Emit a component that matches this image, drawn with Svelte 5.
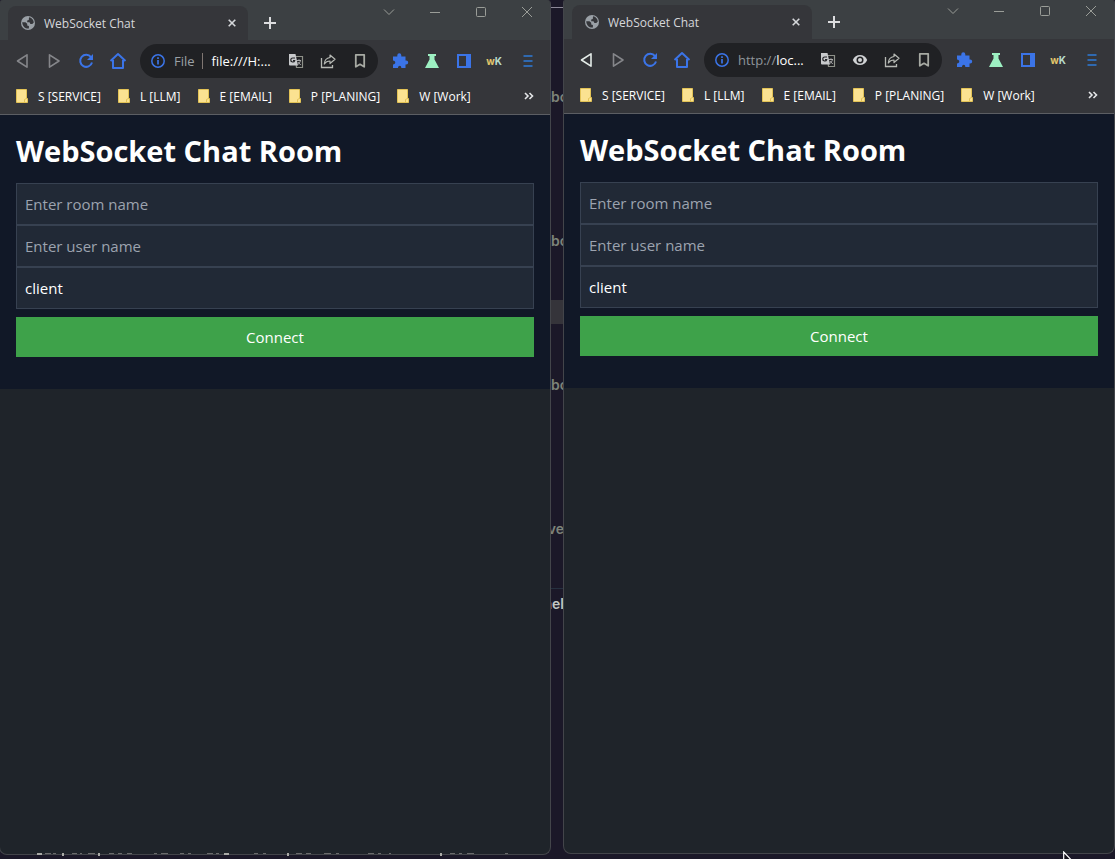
<script>
  const windows = [
    { id: 'left', back: false, eye: false },
    { id: 'right', back: true, eye: true }
  ];
  const bookmarks = ['S [SERVICE]', 'L [LLM]', 'E [EMAIL]', 'P [PLANING]', 'W [Work]'];
  const fragments = [
    { text: 'bo', top: 86 },
    { text: 'bo', top: 230 },
    { text: 'bo', top: 374 },
    { text: 'ove', top: 518, end: true },
    { text: 'hel', top: 593, end: true, bright: true }
  ];
  const slivers = [
    [37, 5, 2], [45, 6, 1], [53, 3, 1], [62, 2, 3], [72, 5, 1], [80, 2, 1], [88, 7, 1], [98, 2, 3],
    [109, 5, 1], [118, 4, 1], [127, 5, 1], [154, 3, 1], [161, 7, 1], [180, 4, 1], [188, 3, 1],
    [207, 6, 1], [216, 3, 1], [224, 5, 2], [254, 4, 1], [263, 3, 1], [287, 2, 3], [296, 6, 1],
    [306, 5, 1], [324, 7, 1], [336, 3, 1], [368, 6, 1], [378, 3, 1], [389, 2, 1], [440, 2, 3],
    [450, 5, 1], [459, 3, 1], [467, 7, 1], [505, 3, 1]
  ];
</script>

<main class="desktop">
  <div class="backdrop" aria-hidden="true">
    <div class="rule"></div>
    <div class="band"></div>
    <div class="rule low"></div>
    {#each fragments as f}
      <span class="fragment" class:end={f.end} class:bright={f.bright} style="top: {f.top}px">{f.text}</span>
    {/each}
  </div>

  {#each windows as w}
    <section class="window {w.id}">
      <header>
        <div class="tabstrip">
          <div class="tab">
            <svg class="globe" width="16" height="16" viewBox="0 0 16 16">
              <circle cx="8" cy="8" r="7" fill="#9aa0a6" />
              <path d="M2.2 7.2h3.3l1.7 1.6v1.7l1.7.4v2.6c-3.4.4-6.4-2-6.7-6.3zM9 2.3c2.6.4 4.6 2.6 4.8 5.1l-1.5 1.7-1.9-.2-.9-1.7H7.200V5.600l1.600-.5z" fill="#35363a" />
            </svg>
            <span class="title">WebSocket Chat</span>
            <button class="close" aria-label="Close tab">
              <svg width="8" height="8" viewBox="0 0 8 8"><path d="M.7.7l6.6 6.6M7.300.7L.7 7.300" stroke="#d5d7da" stroke-width="1.600" /></svg>
            </button>
          </div>
          <button class="plus" aria-label="New tab">
            <svg width="12" height="12" viewBox="0 0 12 12"><path d="M6 0v12M0 6h12" stroke="#dcdddf" stroke-width="2" /></svg>
          </button>
          <div class="controls">
            <button aria-label="Search tabs"><svg width="12" height="12" viewBox="0 0 12 12"><path d="M1 3.500l5 5 5-5" /></svg></button>
            <button aria-label="Minimize"><svg width="12" height="12" viewBox="0 0 12 12"><path d="M1 6.500h10" /></svg></button>
            <button aria-label="Maximize"><svg width="12" height="12" viewBox="0 0 12 12"><rect x="1.500" y="1.500" width="9" height="9" rx="1" /></svg></button>
            <button aria-label="Close"><svg width="12" height="12" viewBox="0 0 12 12"><path d="M1 1l10 10M11 1L1 11" /></svg></button>
          </div>
        </div>

        <div class="toolbar">
          <button aria-label="Back" class:active={w.back}>
            <svg width="18" height="18" viewBox="0 0 18 18"><path d="M14 2.800v12.400L4.500 9z" fill="none" stroke="currentColor" stroke-width="1.600" stroke-linejoin="round" /></svg>
          </button>
          <button aria-label="Forward">
            <svg width="18" height="18" viewBox="0 0 18 18"><path d="M4.500 2.800v12.400L14 9z" fill="none" stroke="currentColor" stroke-width="1.600" stroke-linejoin="round" /></svg>
          </button>
          <button aria-label="Reload">
            <svg width="18" height="18" viewBox="0 0 18 18"><path d="M14 5.200A6 6 0 1 0 15 10.500" fill="none" stroke="#3b74e7" stroke-width="2" /><path d="M16 2v6h-6z" fill="#3b74e7" /></svg>
          </button>
          <button aria-label="Home">
            <svg width="18" height="18" viewBox="0 0 18 18"><path d="M1.500 9L9 2l7.500 7M4 8v8h10V8" fill="none" stroke="#3b74e7" stroke-width="2" stroke-linejoin="round" /></svg>
          </button>
          <div class="omnibox">
            <svg class="info" width="16" height="16" viewBox="0 0 16 16"><circle cx="8" cy="8" r="6.200" fill="none" stroke="#3b74e7" stroke-width="1.500" /><path d="M8 7v4.500M8 4.300v1.700" stroke="#3b74e7" stroke-width="1.700" /></svg>
            {#if w.eye}
              <span class="url"><i>http://</i>loc...</span>
            {:else}
              <span class="scheme">File</span>
              <span class="divider"></span>
              <span class="url">file:///H:...</span>
            {/if}
            <div class="actions">
              <button aria-label="Translate">
                <svg width="16" height="16" viewBox="0 0 16 16"><path d="M7 3.500h7.500v11H8.500z" fill="none" stroke="#8e9189" stroke-width="1.200" /><path d="M1 1h6.500l2.500 11.500H2a1 1 0 0 1-1-1z" fill="#c8cacc" /><path d="M7 5H4.800a2 2 0 1 0 1.900 2.500H5" fill="none" stroke="#202124" stroke-width="1.200" /><path d="M9 7.500h4M11 6.300v1.200M12.500 7.500c-.5 2-1.500 3.200-2.500 4M9.800 9l3 3" fill="none" stroke="#aaa" stroke-width="1" /></svg>
              </button>
              {#if w.eye}
                <button aria-label="Blocked cookies">
                  <svg width="16" height="16" viewBox="0 0 16 16"><path d="M.8 8C2.200 4.700 4.900 3 8 3s5.800 1.700 7.200 5c-1.400 3.300-4.100 5-7.200 5S2.200 11.300.8 8z" fill="#d0d2d4" /><circle cx="8" cy="8" r="3.500" fill="#202124" /><circle cx="8" cy="8" r="2" fill="#d0d2d4" /></svg>
                </button>
              {/if}
              <button aria-label="Share">
                <svg width="16" height="16" viewBox="0 0 16 16"><path d="M1.500 5v9.500h11V12" fill="none" stroke="#b6b9b4" stroke-width="1.300" /><path d="M10 2l5 4.300-5 4.200V8C7.500 8 5.600 9 4.300 11 4.500 7.300 6.500 5 10 4.500z" fill="none" stroke="#b6b9b4" stroke-width="1.200" stroke-linejoin="round" /></svg>
              </button>
              <button aria-label="Bookmark this page">
                <svg width="16" height="16" viewBox="0 0 16 16"><path d="M3.800 1.800h8.400v12L8 11.300l-4.200 2.500z" fill="none" stroke="#a7aaa3" stroke-width="1.800" stroke-linejoin="round" /></svg>
              </button>
            </div>
          </div>
          <button aria-label="Extensions">
            <svg width="18" height="18" viewBox="0 0 18 18"><path d="M2 4.500h4.300V3.300a2 2 0 0 1 4 0v1.200h4.200v4h.7a2 2 0 0 1 0 4h-.7V16h-4.200c.2-3-3.200-3-3.300 0H2v-3.500c3-.2 3-3.700 0-4z" fill="#3b74e7" /></svg>
          </button>
          <button aria-label="Labs">
            <svg width="18" height="18" viewBox="0 0 18 18"><path d="M5 2h8v2h-1.500v3.500L16 16H2l4.500-8.500V4H5z" fill="#9df0c2" /></svg>
          </button>
          <button aria-label="Side panel">
            <svg width="18" height="18" viewBox="0 0 18 18"><path d="M2 2h14v14H2zM4 4v10h7V4z" fill="#3b74e7" fill-rule="evenodd" /></svg>
          </button>
          <button class="profile" aria-label="Profile"><b>w</b><b class="k">K</b></button>
          <button aria-label="Menu">
            <svg width="18" height="18" viewBox="0 0 18 18"><path d="M4.500 4h9M4.500 9h9M4.500 14h9" stroke="#2f69b0" stroke-width="2" /></svg>
          </button>
        </div>

        <nav class="bookmarks">
          {#each bookmarks as b}
            <a href="#bookmark">
              <svg width="12" height="14" viewBox="0 0 12 14"><path d="M.5.5h10v9h1v4H.5z" fill="#fbe291" stroke="#e3c356" /><path d="M8.500 13.500v-3l2-1" fill="none" stroke="#e3c356" /></svg>
              {b}
            </a>
          {/each}
          <button class="more" aria-label="More bookmarks">
            <svg width="10" height="8" viewBox="0 0 10 8"><path d="M1 1l3 3-3 3M5.500 1l3 3-3 3" fill="none" stroke="#e4e6e8" stroke-width="1.600" /></svg>
          </button>
        </nav>
      </header>

      <form class="page" onsubmit={(e) => e.preventDefault()}>
        <h1>WebSocket Chat Room</h1>
        <input type="text" placeholder="Enter room name" aria-label="Room name" />
        <input type="text" placeholder="Enter user name" aria-label="User name" />
        <input type="text" value="client" aria-label="Role" />
        <button type="submit">Connect</button>
      </form>
    </section>
  {/each}

  <svg class="slivers" width="520" height="4" viewBox="0 0 520 4" aria-hidden="true">
    {#each slivers as [x, width, height]}
      <rect {x} y="0" {width} {height} fill={height > 1 ? '#a9aaa6' : '#6a6b6c'} />
    {/each}
  </svg>

  <svg class="cursor" width="14" height="20" viewBox="0 0 14 20" aria-hidden="true">
    <path d="M.7 1v15l3.500-3.500 2.500 6 2-1-2.500-5.500h5z" fill="#15131c" stroke="#fff" stroke-width="1.200" />
  </svg>
</main>

<style>
  :global(body) {
    margin: 0;
    background: #1b1828;
  }
  .desktop {
    position: relative;
    display: grid;
    grid-template-columns: 1fr 1fr;
    gap: 12px;
    box-sizing: border-box;
    height: 100vh;
    margin-left: -1px;
    padding-bottom: 4px;
    overflow: hidden;
    background: #1b1828;
    font-family: "Open Sans", "Noto Sans", sans-serif;
    font-size: 12px;
    color: #fff;
  }
  button {
    display: flex;
    align-items: center;
    justify-content: center;
    padding: 0;
    border: 0;
    background: none;
    color: inherit;
    font: inherit;
  }
  svg {
    display: block;
    flex: none;
  }

  .backdrop {
    position: absolute;
    top: 0;
    bottom: 0;
    left: 50%;
    width: 14px;
    margin-left: -7px;
    overflow: hidden;
  }
  .rule {
    position: absolute;
    top: 7px;
    width: 100%;
    height: 1px;
    background: #8d8998;
  }
  .rule.low {
    top: 588px;
    background: #26303f;
  }
  .band {
    position: absolute;
    top: 300px;
    width: 100%;
    height: 24px;
    background: #35343a;
  }
  .fragment {
    position: absolute;
    left: 1px;
    color: #7d8379;
    font-family: "Inter", sans-serif;
    font-size: 14px;
    font-weight: 600;
    line-height: 22px;
  }
  .fragment.end {
    right: 0;
    left: auto;
  }
  .bright {
    color: #c2c6c2;
  }

  .window {
    position: relative;
    display: flex;
    flex-direction: column;
    min-width: 0;
    overflow: hidden;
    border: 1px solid #43454a;
    border-top: 0;
    border-radius: 4px 4px 8px 8px;
    background: #1f242a;
  }
  .window.right {
    margin: -1px 0 1px;
  }
  header {
    border-bottom: 1px solid #5c5e63;
    background: #35363a;
  }
  .tabstrip {
    display: flex;
    align-items: flex-end;
    height: 40px;
    padding-left: 8px;
    background: #3c4043;
  }
  .tab {
    display: flex;
    align-items: center;
    box-sizing: border-box;
    width: 240px;
    height: 34px;
    padding: 0 8px 0 12px;
    gap: 8px;
    border-radius: 8px 8px 0 0;
    background: #35363a;
    color: #d5d7da;
  }
  .title {
    flex: 1;
  }
  .close {
    width: 16px;
    height: 16px;
  }
  .plus {
    width: 28px;
    height: 34px;
    margin-left: 8px;
  }
  .controls {
    display: flex;
    align-self: flex-start;
    margin-left: auto;
  }
  .controls button {
    width: 46px;
    height: 24px;
  }
  .controls svg {
    fill: none;
    stroke: #9a9d98;
  }

  .toolbar {
    display: flex;
    align-items: center;
    height: 42px;
    padding: 0 6px;
    color: #85868a;
  }
  .toolbar > button {
    flex: none;
    width: 32px;
    height: 32px;
  }
  .toolbar > .active {
    color: #e4ece8;
  }
  .omnibox {
    display: flex;
    flex: 1;
    align-items: center;
    box-sizing: border-box;
    height: 34px;
    margin: 0 6px;
    padding: 0 2px 0 10px;
    border-radius: 17px;
    background: #202124;
    font-size: 13px;
  }
  .info {
    margin-right: 8px;
  }
  .scheme {
    color: #9aa0a6;
  }
  .divider {
    width: 1px;
    height: 16px;
    margin: 0 9px 0 7px;
    background: #7f7672;
  }
  .url {
    color: #fff;
  }
  .url i {
    color: #8f959b;
    font-style: normal;
  }
  .actions {
    display: flex;
    margin-left: auto;
  }
  .actions button {
    width: 32px;
    height: 32px;
  }
  .toolbar > .profile {
    padding-right: 4px;
    font-family: "Inter", sans-serif;
    font-size: 10px;
    color: #e3c66b;
  }
  .profile .k {
    color: #b6dccb;
  }

  .bookmarks {
    display: flex;
    align-items: center;
    height: 28px;
    padding: 0 16px 4px;
    gap: 17px;
  }
  .bookmarks a {
    display: flex;
    align-items: center;
    gap: 10px;
    color: #fff;
    text-decoration: none;
    white-space: nowrap;
  }
  .more {
    margin-left: auto;
  }

  .page {
    display: flex;
    flex-direction: column;
    padding: 16px 16px 32px;
    background: #111827;
  }
  h1 {
    margin: 0 0 12px;
    font-size: 29px;
    line-height: 40px;
    white-space: nowrap;
  }
  .page input {
    box-sizing: border-box;
    width: 100%;
    height: 42px;
    padding: 8px;
    border: 1px solid #374151;
    border-radius: 0;
    background: #212936;
    color: #fff;
    font: inherit;
    font-size: 15px;
  }
  .page input::placeholder {
    color: #9ca3af;
  }
  .page button {
    height: 40px;
    margin-top: 8px;
    background: #3ea24a;
    font-size: 15px;
  }

  .slivers {
    position: absolute;
    bottom: 2px;
    left: 1px;
  }
  .cursor {
    position: absolute;
    right: 38px;
    bottom: -12px;
  }
</style>
